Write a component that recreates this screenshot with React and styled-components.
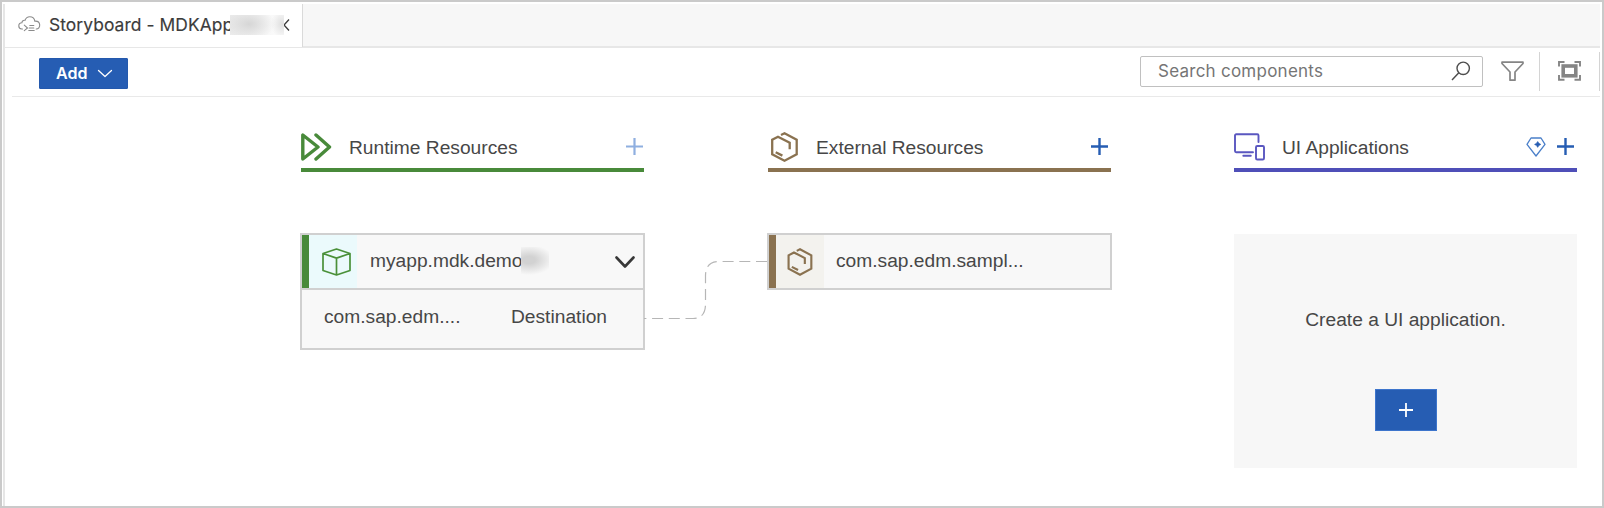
import React from "react";
import styled, { createGlobalStyle } from "styled-components";

const GlobalStyle = createGlobalStyle`
  *, *::before, *::after { box-sizing: border-box; }
  body { margin: 0; background: #fff; }
  svg { display: block; flex: none; }
  button { padding: 0; border: 0; background: none; font: inherit; color: inherit; }
`;

const Frame = styled.div`
  display: flex;
  width: 1604px;
  height: 508px;
  padding: 2px 2px 0 1px;
  border: 2px solid #cacaca;
  font-family: "Liberation Sans", Arial, sans-serif;
  color: #474747;
  overflow: hidden;
`;

const Workspace = styled.div`
  flex: 1;
  border-left: 2px solid #e6e6e6;
`;

const TabBar = styled.div`
  display: flex;
  height: 44px;
  background: #f7f7f7;
  border-bottom: 2px solid #e7e7e7;
`;

const Tab = styled.div`
  display: flex;
  align-items: center;
  width: 298px;
  height: 43px;
  padding: 0 0 2px 13px;
  background: #fff;
  border-right: 1px solid #dadada;
  font: 17.4px Inter, sans-serif;
  color: #3c3c3c;
`;

const TabTitle = styled.span`
  width: 182px;
  margin-left: 8px;
  white-space: nowrap;
  letter-spacing: 0.08px;
  -webkit-text-stroke: 0.15px #3c3c3c;
`;

const Smudge = styled.span`
  flex: none;
  width: ${(p) => p.$width}px;
  height: ${(p) => p.$height}px;
  margin-left: ${(p) => p.$overlap || 0}px;
  background: ${(p) => p.$fill};
`;

const Toolbar = styled.div`
  display: flex;
  align-items: center;
  height: 49px;
  margin-left: 7px;
  padding: 0 0 0 27px;
  border-bottom: 1px solid #e9e9e9;
`;

const AddButton = styled.button`
  display: flex;
  align-items: center;
  justify-content: space-between;
  width: 89px;
  height: 31px;
  margin-top: 2px;
  padding: 0 14px 0 16px;
  border: 1px solid #2459ad;
  border-radius: 1px;
  background: #265db3;
  color: #fff;
  font: 600 16px Inter, sans-serif;
`;

const SearchBox = styled.div`
  display: flex;
  align-items: center;
  justify-content: space-between;
  width: 343px;
  height: 31px;
  margin: -2px 18px 0 auto;
  padding: 0 11px 0 17px;
  border: 1px solid #c0c0c0;
  border-radius: 2px;
  color: #757575;
  font: 17px Inter, sans-serif;
  letter-spacing: 0.25px;
`;

const ToolIcon = styled.span`
  margin: -2px ${(p) => p.$right || 0}px 0 0;
`;

const Divider = styled.span`
  width: 1px;
  height: 39px;
  margin: -2px ${(p) => p.$right}px 0 ${(p) => p.$left}px;
  background: #d4d4d4;
`;

const Board = styled.div`
  display: flex;
  padding: 33px 0 0 296px;
`;

const Column = styled.section`
  display: flex;
  flex-direction: column;
  width: 343px;
  margin-right: ${(p) => p.$gap || 0}px;
`;

const ColumnHeader = styled.header`
  display: flex;
  align-items: center;
  height: 42px;
  margin-bottom: 61px;
  padding: 0 ${(p) => p.$end}px 5px 0;
  border-bottom: 4px solid ${(p) => p.$color};
`;

const IconSlot = styled.span`
  width: 48px;
`;

const ColumnTitle = styled.h2`
  flex: 1;
  margin: 3px 0 0;
  font-size: 19.2px;
  font-weight: 400;
  line-height: 24px;
`;

const HeaderActions = styled.div`
  display: flex;
  align-items: center;
  gap: 11px;
`;

const Card = styled.article`
  width: 345px;
  margin-left: -1px;
  border: 2px solid #d0d0d0;
  background: #f8f8f8;
  font-size: 19.2px;
`;

const CardHead = styled.div`
  display: flex;
  align-items: center;
  height: 53px;
  padding-right: 8px;
`;

const CardIcon = styled.div`
  display: flex;
  align-items: center;
  justify-content: center;
  width: 55px;
  height: 53px;
  padding-left: ${(p) => p.$shift || 0}px;
  border-left: 7px solid ${(p) => p.$color};
  background: ${(p) => p.$tint};
`;

const CardTitle = styled.span`
  margin-left: ${(p) => p.$left}px;
  padding-bottom: 2px;
  white-space: nowrap;
`;

const Toggle = styled.button`
  margin-left: auto;
`;

const CardRow = styled.div`
  display: flex;
  justify-content: space-between;
  align-items: center;
  height: 60px;
  padding: 0 36px 4px 22px;
  border-top: 2px solid #d0d0d0;
`;

const LinkLane = styled.div`
  width: 124px;
  padding-top: 122px;
`;

const EmptyPanel = styled.div`
  display: flex;
  flex-direction: column;
  align-items: center;
  height: 234px;
  margin-top: 1px;
  padding-top: 73px;
  background: #f7f7f7;
  font-size: 19.2px;
  line-height: 26px;
`;

const CreateButton = styled.button`
  display: flex;
  align-items: center;
  justify-content: center;
  width: 62px;
  height: 42px;
  margin-top: 56px;
  margin-left: 1px;
  border: 1px solid #3d75cc;
  background: #265db3;
`;

const CloudIcon = () => (
  <svg width="23" height="17" viewBox="0 0 23 17" fill="none" stroke="#8b8b8b" strokeWidth="1.1" strokeLinecap="round">
    <path d="M4.5 13H3.8C2 12.8.8 11.5.8 9.9c0-1.8 1.3-3.1 3.1-3.1.1-1.9 1.6-2.8 3.1-2.5C7.9 2 9.6.8 11.7.8c2.8 0 4.8 1.9 5.1 4.4 2.6-.2 4.7 1.2 4.9 3.7.2 2.3-1.3 4-3.5 4.1" />
    <path d="M6.3 9.2 9.5 12l-3.2 2.6M10.8 14.5h5.4M11.2 12h4.6M11.8 9.5h4" />
  </svg>
);

const HalfClose = () => (
  <svg width="6" height="12" viewBox="0 0 6 12" fill="none" stroke="#3c3c3c" strokeWidth="1.3">
    <path d="M5 .5 0 6l5 5.5" />
  </svg>
);

const ChevronIcon = ({ width, height, color, weight }) => (
  <svg width={width} height={height} viewBox={`0 0 ${width} ${height}`} fill="none" stroke={color} strokeWidth={weight} strokeLinecap="round" strokeLinejoin="round">
    <path d={`M1.5 1.5 ${width / 2} ${height - 1.5} ${width - 1.5} 1.5`} />
  </svg>
);

const PlusIcon = ({ size, color, weight }) => (
  <svg width={size} height={size} viewBox={`0 0 ${size} ${size}`} fill="none" stroke={color} strokeWidth={weight}>
    <path d={`M0 ${size / 2}H${size}M${size / 2} 0V${size}`} />
  </svg>
);

const SearchIcon = () => (
  <svg width="20" height="20" viewBox="0 0 20 20" fill="none" stroke="#4d4d4d" strokeWidth="1.4">
    <circle cx="12.2" cy="7.3" r="6.2" />
    <path d="M7.8 11.7 1 19" />
  </svg>
);

const FilterIcon = () => (
  <svg width="23" height="20" viewBox="0 0 23 20" fill="none" stroke="#858585" strokeWidth="1.7" strokeLinejoin="round">
    <path d="M1 1.2h21v1.3L14 11v8.2H9V11L1 2.5Z" />
  </svg>
);

const FitIcon = () => (
  <svg width="23" height="20" viewBox="0 0 23 20" fill="none" stroke="#858585">
    <path strokeWidth="1.9" d="M1 5.6V1h5.500M16.500 1H22v4.600M22 14v4.800h-5.500M6.500 18.800H1V14" />
    <rect x="5.200" y="5" width="12.600" height="9.800" strokeWidth="3.600" />
  </svg>
);

const RuntimeIcon = () => (
  <svg width="31" height="28" viewBox="0 0 31 28" fill="none" stroke="#488a3a" strokeWidth="3.400" strokeLinecap="round" strokeLinejoin="round">
    <path d="M1.800 2v24L17 14ZM15 2l13.500 12L15 26" />
  </svg>
);

const HexIcon = ({ width, height }) => (
  <svg width={width} height={height} viewBox="0 0 28 30" fill="none" stroke="#8a7250" strokeWidth="2.300">
    <path d="M10.500 3 14 1.300 26.200 7.800v14.400L14 28.700 1.700 22.200V7.800L7.500 4.700 19.200 10.800v6.400M5.200 20.200l6.700 3.400" />
  </svg>
);

const DevicesIcon = () => (
  <svg width="32" height="28" viewBox="0 0 32 28" fill="none" stroke="#5a57c0" strokeWidth="1.900" strokeLinecap="round">
    <path d="M19 19.200H2.200a1.200 1.200 0 0 1-1.200-1.200V2.500a1.200 1.200 0 0 1 1.200-1.200H23.300A1.200 1.200 0 0 1 24.500 2.500v6.500M9.300 22.700h7.500" />
    <rect x="22" y="13" width="8" height="13.500" rx="1.300" />
  </svg>
);

const GemIcon = () => (
  <svg width="20" height="20" viewBox="0 0 20 20" fill="none" stroke="#4a7fc9" strokeWidth="1.300" strokeLinejoin="round">
    <path d="M5 1h10l4 6.300L10 19 1 7.300Z" />
    <path d="M11.700 4.400 12.900 6.200 14.900 7.400 12.900 8.600 11.700 10.400 10.500 8.600 8.500 7.400 10.500 6.200Z" fill="#265db3" stroke="#265db3" strokeWidth="0.500" />
  </svg>
);

const CubeIcon = () => (
  <svg width="29" height="28" viewBox="0 0 29 28" fill="none" stroke="#4a9039" strokeWidth="1.700" strokeLinejoin="round">
    <path d="M14.500 1 28 5.500v17L14.500 27 1 22.500v-17ZM1 5.500l13.500 4.600L28 5.500M14.500 10.100V27" />
  </svg>
);

const LinkLine = () => (
  <svg width="124" height="78" viewBox="0 0 124 78" fill="none" stroke="#b6b6b6" strokeWidth="1.200" strokeDasharray="11 5.700">
    <path d="M123 9.500H75Q61.500 9.500 61.500 24V52Q61.500 66.500 49 66.500H0" />
  </svg>
);

export default function App() {
  return (
    <>
      <GlobalStyle />
      <Frame>
        <Workspace>
          <TabBar>
            <Tab>
              <CloudIcon />
              <TabTitle>Storyboard - MDKApp</TabTitle>
              <Smudge
                $width={54}
                $height={20}
                $overlap={-1}
                $fill="radial-gradient(ellipse 26px 16px at 19px 9px, #d6d6d6, transparent), radial-gradient(ellipse 11px 14px at 52px 9px, #dfdfdf, transparent), linear-gradient(90deg, #ececec, #fafafa 45px)"
              />
              <HalfClose />
            </Tab>
          </TabBar>
          <Toolbar>
            <AddButton>
              Add
              <ChevronIcon width={16} height={9} color="#fff" weight={1.3} />
            </AddButton>
            <SearchBox>
              Search components
              <SearchIcon />
            </SearchBox>
            <ToolIcon $right={1}><FilterIcon /></ToolIcon>
            <Divider $left={14} $right={18} />
            <ToolIcon><FitIcon /></ToolIcon>
            <Divider $left={18} $right={0} />
          </Toolbar>
          <Board>
            <Column>
              <ColumnHeader $color="#488a3a" $end={1}>
                <IconSlot><RuntimeIcon /></IconSlot>
                <ColumnTitle>Runtime Resources</ColumnTitle>
                <PlusIcon size={17} color="#8fafe0" weight={2.2} />
              </ColumnHeader>
              <Card>
                <CardHead>
                  <CardIcon $color="#488a3a" $tint="#ebfafc" $shift={6}><CubeIcon /></CardIcon>
                  <CardTitle $left={13}>myapp.mdk.demo</CardTitle>
                  <Smudge
                    $width={28}
                    $height={30}
                    $overlap={-2}
                    $fill="radial-gradient(ellipse 25px 15px at 8px 13px, #d2d2d2 25%, transparent), #f8f8f8"
                  />
                  <Toggle aria-label="Collapse">
                    <ChevronIcon width={20} height={12} color="#383838" weight={2.6} />
                  </Toggle>
                </CardHead>
                <CardRow>
                  <span>com.sap.edm....</span>
                  <span>Destination</span>
                </CardRow>
              </Card>
            </Column>
            <LinkLane><LinkLine /></LinkLane>
            <Column $gap={123}>
              <ColumnHeader $color="#8a7250" $end={3}>
                <IconSlot><HexIcon width={33} height={30} /></IconSlot>
                <ColumnTitle>External Resources</ColumnTitle>
                <PlusIcon size={17} color="#265db3" weight={2.4} />
              </ColumnHeader>
              <Card>
                <CardHead>
                  <CardIcon $color="#8a7250" $tint="#f3f2ee"><HexIcon width={26} height={28} /></CardIcon>
                  <CardTitle $left={12}>com.sap.edm.sampl...</CardTitle>
                </CardHead>
              </Card>
            </Column>
            <Column>
              <ColumnHeader $color="#4f4fb8" $end={3}>
                <IconSlot><DevicesIcon /></IconSlot>
                <ColumnTitle>UI Applications</ColumnTitle>
                <HeaderActions>
                  <GemIcon />
                  <PlusIcon size={17} color="#265db3" weight={2.4} />
                </HeaderActions>
              </ColumnHeader>
              <EmptyPanel>
                Create a UI application.
                <CreateButton aria-label="Create">
                  <PlusIcon size={14} color="#fff" weight={1.8} />
                </CreateButton>
              </EmptyPanel>
            </Column>
          </Board>
        </Workspace>
      </Frame>
    </>
  );
}
